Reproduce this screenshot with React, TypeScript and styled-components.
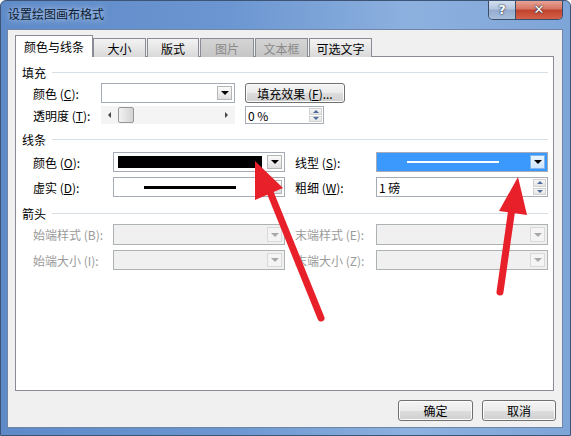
import React from "react";
import styled, { createGlobalStyle, css } from "styled-components";

const Global = createGlobalStyle`
  html, body { margin: 0; padding: 0; background: #fff; }
  body { font-family: "Noto Sans CJK SC", "Noto Sans", sans-serif; font-size: 12px; }
  * { box-sizing: border-box; }
`;

const Frame = styled.div`
  position: relative;
  width: 571px;
  height: 436px;
  display: flex;
  flex-direction: column;
  border: 1px solid #3d5476;
  border-radius: 6px 6px 0 0;
  background: linear-gradient(90deg, #5e8ac8 0%, #6b96d1 40%, #8db1df 72%, #7ea5d8 100%);
  overflow: hidden;
`;

const TitleBar = styled.div`
  height: 28px;
  display: flex;
  align-items: flex-start;
  justify-content: space-between;
  padding-left: 7px;
`;

const Title = styled.div`
  margin-top: 5px;
  font-size: 12px;
  line-height: 16px;
  color: #0b1a33;
  text-shadow: 0 0 6px rgba(255,255,255,0.8);
`;

const WinButtons = styled.div`
  display: flex;
  margin-right: 7px;
  margin-top: -1px;
  border: 1px solid #3b4c66;
  border-top: none;
  border-radius: 0 0 5px 5px;
  overflow: hidden;
`;

const WinButton = styled.div<{ $close?: boolean }>`
  height: 19px;
  width: ${p => (p.$close ? 46 : 27)}px;
  display: flex;
  align-items: center;
  justify-content: center;
  font-family: "DejaVu Sans", sans-serif;
  font-weight: bold;
  color: #fff;
  text-shadow: 0 0 2px #1b2a44, 0 0 1px #1b2a44;
  ${p =>
    p.$close
      ? css`
          background: linear-gradient(#e9a99b 0%, #d77766 45%, #c2432e 55%, #d4614a 100%);
          font-size: 13px;
        `
      : css`
          border-right: 1px solid #3b4c66;
          background: linear-gradient(#d6e1ef 0%, #b5c7e0 45%, #95acce 55%, #a7bedc 100%);
          font-size: 13px;
        `}
`;

const Client = styled.div`
  flex: 1;
  margin: 0 7px 7px 6px;
  border: 1px solid #6f86a6;
  background: #f0f0f0;
  padding: 5px 8px 0 7px;
  display: flex;
  flex-direction: column;
`;

const TabRow = styled.div`
  display: flex;
  align-items: flex-end;
  height: 22px;
  margin-bottom: -1px;
  position: relative;
  z-index: 1;
`;

const Tab = styled.div<{ $active?: boolean; $disabled?: boolean; $w: number; $gap?: number }>`
  width: ${p => p.$w}px;
  margin-left: ${p => p.$gap ?? 0}px;
  display: flex;
  align-items: center;
  justify-content: center;
  border: 1px solid #898c95;
  border-bottom: none;
  font-size: 12px;
  ${p =>
    p.$active
      ? css`
          height: 22px;
          background: #fff;
          color: #000;
        `
      : p.$disabled
      ? css`
          height: 19px;
          background: linear-gradient(#d4d4d4, #c6c6c6);
          color: #8a8a8a;
        `
      : css`
          height: 19px;
          background: linear-gradient(#f3f3f3, #d9d9d9);
          color: #000;
        `}
`;

const Panel = styled.div`
  height: 335px;
  border: 1px solid #898c95;
  background: #fff;
  padding: 7px 5px 0 6px;
  display: flex;
  flex-direction: column;
`;

const SectionHead = styled.div<{ $mt: number }>`
  margin-top: ${p => p.$mt}px;
  height: 16px;
  display: flex;
  align-items: center;
  color: #000;
  &::after {
    content: "";
    flex: 1;
    height: 1px;
    margin-left: 6px;
    background: #d5dfe5;
  }
`;

const Row = styled.div<{ $mt: number; $h: number }>`
  margin-top: ${p => p.$mt}px;
  height: ${p => p.$h}px;
  display: flex;
  align-items: stretch;
  padding-left: 11px;
`;

const Label = styled.div<{ $w: number; $ml?: number; $disabled?: boolean }>`
  width: ${p => p.$w}px;
  margin-left: ${p => p.$ml ?? 0}px;
  display: flex;
  align-items: center;
  white-space: pre;
  color: ${p => (p.$disabled ? "#9a9a9a" : "#000")};
  u { text-decoration: underline; }
`;

const Combo = styled.div<{ $w: number; $variant?: "white" | "blue" | "disabled" }>`
  width: ${p => p.$w}px;
  display: flex;
  align-items: stretch;
  border: 1px solid ${p => (p.$variant === "disabled" ? "#adb2b5" : "#a5acb5")};
  padding: 2px;
  background: ${p =>
    p.$variant === "blue" ? "#3b98fc" : p.$variant === "disabled" ? "#f0f0f0" : "#fff"};
`;

const ComboField = styled.div<{ $black?: boolean }>`
  flex: 1;
  display: flex;
  align-items: center;
  justify-content: center;
  margin-right: 4px;
  background: ${p => (p.$black ? "#000" : "transparent")};
  ${p => p.$black && css`margin: 1px 5px 1px 2px;`}
`;

const LineSample = styled.div<{ $w: number; $color: string; $h: number }>`
  width: ${p => p.$w}px;
  height: ${p => p.$h}px;
  background: ${p => p.$color};
`;

const DropBtn = styled.div<{ $variant?: "white" | "blue" | "disabled" }>`
  width: 15px;
  display: flex;
  align-items: center;
  justify-content: center;
  border: 1px solid ${p => (p.$variant === "disabled" ? "#d9d9d9" : p.$variant === "blue" ? "#7fb7ee" : "#b5b5b5")};
  background: ${p =>
    p.$variant === "disabled"
      ? "#f4f4f4"
      : p.$variant === "blue"
      ? "linear-gradient(#eaf5ff, #cfe6fb)"
      : "linear-gradient(#fbfbfb, #dedede)"};
  &::after {
    content: "";
    border-left: 4px solid transparent;
    border-right: 4px solid transparent;
    border-top: 4px solid ${p => (p.$variant === "disabled" ? "#a8a8a8" : "#000")};
  }
`;

const Button = styled.div<{ $w: number; $ml?: number }>`
  width: ${p => p.$w}px;
  margin-left: ${p => p.$ml ?? 0}px;
  display: flex;
  align-items: center;
  justify-content: center;
  white-space: pre;
  border: 1px solid #707070;
  border-radius: 3px;
  background: linear-gradient(#f4f4f4 0%, #ebebeb 50%, #dddddd 51%, #cfcfcf 100%);
  color: #000;
  box-shadow: inset 0 0 0 1px #fcfcfc;
  u { text-decoration: underline; }
`;

const ScrollBar = styled.div`
  width: 134px;
  display: flex;
  align-items: center;
  background: #f4f4f4;
  padding: 1px 0;
`;

const ScrollArrow = styled.div<{ $dir: "l" | "r" }>`
  width: 17px;
  align-self: stretch;
  display: flex;
  align-items: center;
  justify-content: center;
  &::after {
    content: "";
    border-top: 3px solid transparent;
    border-bottom: 3px solid transparent;
    ${p => (p.$dir === "l" ? "border-right: 3px solid #444;" : "border-left: 3px solid #444;")}
  }
`;

const Track = styled.div`
  flex: 1;
  align-self: stretch;
  display: flex;
`;

const Thumb = styled.div`
  width: 16px;
  border: 1px solid #979797;
  border-radius: 2px;
  background: linear-gradient(90deg, #f2f2f2, #e2e2e2 50%, #d3d3d3);
`;

const Spin = styled.div<{ $w: number; $ml?: number }>`
  width: ${p => p.$w}px;
  margin-left: ${p => p.$ml ?? 0}px;
  display: flex;
  border: 1px solid #a5acb5;
  background: #fff;
`;

const SpinText = styled.div`
  flex: 1;
  display: flex;
  align-items: center;
  padding-left: 2px;
  white-space: pre;
  color: #000;
`;

const SpinBtns = styled.div`
  width: 13px;
  margin: 1px 1px 1px 0;
  display: flex;
  flex-direction: column;
  gap: 1px;
`;

const SpinBtn = styled.div<{ $up?: boolean }>`
  flex: 1;
  display: flex;
  align-items: center;
  justify-content: center;
  background: linear-gradient(#f6f6f6, #e4e4e4);
  border: 1px solid #d2d2d2;
  &::after {
    content: "";
    border-left: 3px solid transparent;
    border-right: 3px solid transparent;
    ${p => (p.$up ? "border-bottom: 3px solid #4f6b9c;" : "border-top: 3px solid #4f6b9c;")}
  }
`;

const Footer = styled.div`
  margin-top: 9px;
  margin-right: -2px;
  height: 21px;
  display: flex;
  justify-content: flex-end;
`;

const Overlay = styled.svg`
  position: absolute;
  left: -1px;
  top: -1px;
  pointer-events: none;
`;

export default function App() {
  return (
    <>
      <Global />
      <Frame>
        <TitleBar>
          <Title>设置绘图画布格式</Title>
          <WinButtons>
            <WinButton>?</WinButton>
            <WinButton $close>✕</WinButton>
          </WinButtons>
        </TitleBar>
        <Client>
          <TabRow>
            <Tab $active $w={78}>颜色与线条</Tab>
            <Tab $w={53}>大小</Tab>
            <Tab $w={52} $gap={1}>版式</Tab>
            <Tab $w={54} $disabled $gap={1}>图片</Tab>
            <Tab $w={53} $disabled $gap={1}>文本框</Tab>
            <Tab $w={63} $gap={1}>可选文字</Tab>
          </TabRow>
          <Panel>
            <SectionHead $mt={0}>填充</SectionHead>
            <Row $mt={3} $h={20}>
              <Label $w={68}>颜色 (<u>C</u>):</Label>
              <Combo $w={134}>
                <ComboField />
                <DropBtn />
              </Combo>
              <Button $w={100} $ml={10}>填充效果 (<u>F</u>)...</Button>
            </Row>
            <Row $mt={3} $h={18}>
              <Label $w={68}>透明度 (<u>T</u>):</Label>
              <ScrollBar>
                <ScrollArrow $dir="l" />
                <Track>
                  <Thumb />
                </Track>
                <ScrollArrow $dir="r" />
              </ScrollBar>
              <Spin $w={79} $ml={10}>
                <SpinText>0 %</SpinText>
                <SpinBtns>
                  <SpinBtn $up />
                  <SpinBtn />
                </SpinBtns>
              </Spin>
            </Row>

            <SectionHead $mt={7}>线条</SectionHead>
            <Row $mt={5} $h={20}>
              <Label $w={80}>颜色 (<u>O</u>):</Label>
              <Combo $w={172}>
                <ComboField $black />
                <DropBtn />
              </Combo>
              <Label $w={81} $ml={10}>线型 (<u>S</u>):</Label>
              <Combo $w={172} $variant="blue">
                <ComboField>
                  <LineSample $w={92} $h={2} $color="#fff" />
                </ComboField>
                <DropBtn $variant="blue" />
              </Combo>
            </Row>
            <Row $mt={5} $h={20}>
              <Label $w={80}>虚实 (<u>D</u>):</Label>
              <Combo $w={172}>
                <ComboField>
                  <LineSample $w={92} $h={3} $color="#000" />
                </ComboField>
                <DropBtn />
              </Combo>
              <Label $w={81} $ml={10}>粗细 (<u>W</u>):</Label>
              <Spin $w={172}>
                <SpinText>1 磅</SpinText>
                <SpinBtns>
                  <SpinBtn $up />
                  <SpinBtn />
                </SpinBtns>
              </Spin>
            </Row>

            <SectionHead $mt={8}>箭头</SectionHead>
            <Row $mt={3} $h={21}>
              <Label $w={80} $disabled>始端样式 (B):</Label>
              <Combo $w={172} $variant="disabled">
                <ComboField />
                <DropBtn $variant="disabled" />
              </Combo>
              <Label $w={81} $ml={10} $disabled>末端样式 (E):</Label>
              <Combo $w={172} $variant="disabled">
                <ComboField />
                <DropBtn $variant="disabled" />
              </Combo>
            </Row>
            <Row $mt={5} $h={20}>
              <Label $w={80} $disabled>始端大小 (I):</Label>
              <Combo $w={172} $variant="disabled">
                <ComboField />
                <DropBtn $variant="disabled" />
              </Combo>
              <Label $w={81} $ml={10} $disabled>末端大小 (Z):</Label>
              <Combo $w={172} $variant="disabled">
                <ComboField />
                <DropBtn $variant="disabled" />
              </Combo>
            </Row>
          </Panel>
          <Footer>
            <Button $w={75}>确定</Button>
            <Button $w={74} $ml={9}>取消</Button>
          </Footer>
        </Client>
        <Overlay width="571" height="436" viewBox="0 0 571 436">
          <line x1="321" y1="318" x2="270" y2="192" stroke="#e8202a" strokeWidth="7" strokeLinecap="round" />
          <polygon points="255,161 255,200 283,188" fill="#e8202a" />
          <line x1="500" y1="292" x2="512" y2="208" stroke="#e8202a" strokeWidth="7" strokeLinecap="round" />
          <polygon points="518,177 499,211 527,215" fill="#e8202a" />
        </Overlay>
      </Frame>
    </>
  );
}
